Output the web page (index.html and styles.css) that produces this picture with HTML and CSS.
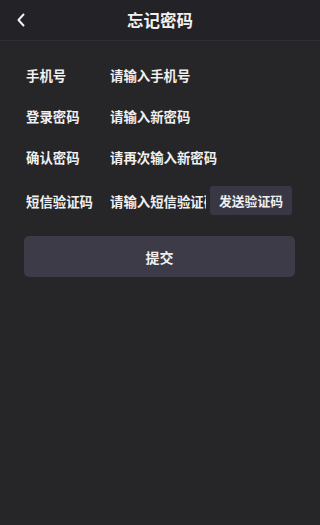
FILE: index.html
```
<!DOCTYPE html>
<html lang="zh">
<head>
<meta charset="utf-8">
<meta name="viewport" content="width=device-width, initial-scale=1">
<title>忘记密码</title>
<link rel="stylesheet" href="styles.css">
</head>
<body>
<header class="nav">
  <span class="back">
    <svg width="10" height="14" viewBox="0 0 10 14"><polyline points="7.5,1.5 2.5,7 7.5,12.5" fill="none" stroke="#f2f2f2" stroke-width="2" stroke-linecap="round" stroke-linejoin="round"/></svg>
  </span>
  <h1 class="title">忘记密码</h1>
</header>
<main class="form">
  <div class="row">
    <label class="label">手机号</label>
    <input class="field" type="text" placeholder="请输入手机号">
  </div>
  <div class="row">
    <label class="label">登录密码</label>
    <input class="field" type="password" placeholder="请输入新密码">
  </div>
  <div class="row">
    <label class="label">确认密码</label>
    <input class="field" type="password" placeholder="请再次输入新密码">
  </div>
  <div class="row row-code">
    <label class="label">短信验证码</label>
    <input class="field" type="text" placeholder="请输入短信验证码">
    <button class="send" type="button">发送验证码</button>
  </div>
  <button class="submit" type="button">提交</button>
</main>
</body>
</html>
```
FILE: styles.css
```
html, body {
  margin: 0;
  padding: 0;
  background: #262528;
  height: 100%;
}
body {
  font-family: "Noto Sans CJK SC", "Noto Sans", sans-serif;
  color: #f0f0f0;
  font-weight: 600;
}
.nav {
  height: 40px;
  background: #232227;
  border-bottom: 1px solid #2d2c37;
  display: flex;
  align-items: center;
  justify-content: center;
  position: relative;
}
.back {
  position: absolute;
  left: 16px;
  top: 13px;
  display: flex;
}
.title {
  margin: 0;
  font-size: 16.5px;
  font-weight: 600;
  color: #f2f2f2;
  line-height: 20px;
}
.form {
  padding: 13px 25px 0 24px;
  display: flex;
  flex-direction: column;
}
.row {
  display: flex;
  align-items: center;
  min-height: 41px;
  padding-left: 2px;
}
.row-code {
  margin-top: 3px;
}
.label {
  width: 84px;
  flex: none;
  font-size: 13.4px;
  color: #f0f0f0;
}
.field {
  flex: 1;
  min-width: 0;
  background: transparent;
  border: 0;
  outline: 0;
  padding: 0;
  font: inherit;
  font-size: 13.4px;
  color: #f0f0f0;
  height: 20px;
}
.field::placeholder {
  color: #f0f0f0;
  opacity: 1;
}
.send {
  flex: none;
  margin-left: 4px;
  margin-right: 3px;
  height: 29px;
  padding: 0 9px;
  border: 0;
  border-radius: 3px;
  background: #393743;
  color: #f0f0f0;
  font: inherit;
  font-size: 12.8px;
}
.submit {
  margin-top: 15px;
  height: 41px;
  border: 0;
  border-radius: 5px;
  background: #3d3b47;
  color: #f0f0f0;
  font: inherit;
  font-size: 14px;
}
```
